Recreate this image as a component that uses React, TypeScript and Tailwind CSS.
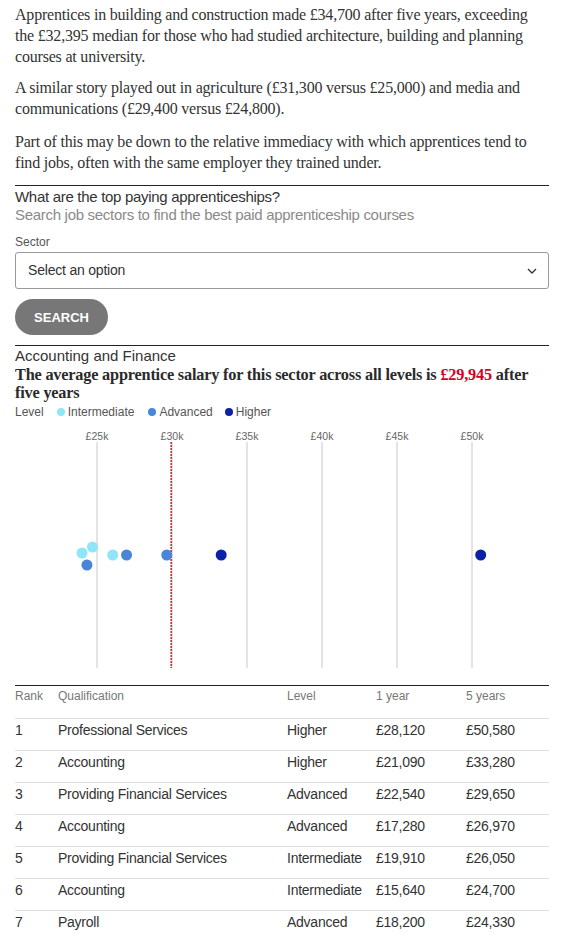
import React from "react";

const INT = "#8ee6f8";
const ADV = "#4a86d8";
const HI = "#0b22a6";

const ticks = [25, 30, 35, 40, 45, 50];
const xOf = (v: number) => 82 + (v - 25000) * 0.015;

const dots = [
  { v: 24000, cy: 133, c: INT },
  { v: 24700, cy: 127, c: INT },
  { v: 26050, cy: 135, c: INT },
  { v: 24330, cy: 145, c: ADV },
  { v: 26970, cy: 135, c: ADV },
  { v: 29650, cy: 135, c: ADV },
  { v: 33280, cy: 135, c: HI },
  { v: 50580, cy: 135, c: HI },
];

const rows = [
  ["1", "Professional Services", "Higher", "£28,120", "£50,580"],
  ["2", "Accounting", "Higher", "£21,090", "£33,280"],
  ["3", "Providing Financial Services", "Advanced", "£22,540", "£29,650"],
  ["4", "Accounting", "Advanced", "£17,280", "£26,970"],
  ["5", "Providing Financial Services", "Intermediate", "£19,910", "£26,050"],
  ["6", "Accounting", "Intermediate", "£15,640", "£24,700"],
  ["7", "Payroll", "Advanced", "£18,200", "£24,330"],
];

export default function App() {
  return (
    <div className="w-[585px] bg-white px-[15px] pt-[4px]">
      <div className="w-[534px]">
        <div className="font-['Liberation_Serif',serif] text-[16px] leading-[21px] tracking-[-0.2px] text-[#333]">
          <p>
            Apprentices in building and construction made £34,700 after five years, exceeding the £32,395 median for those who had studied architecture, building and planning courses at university.
          </p>
          <p className="mt-[10px]">
            A similar story played out in agriculture (£31,300 versus £25,000) and media and communications (£29,400 versus £24,800).
          </p>
          <p className="mt-[12px]">
            Part of this may be down to the relative immediacy with which apprentices tend to find jobs, often with the same employer they trained under.
          </p>
        </div>

        <section className="mt-[12px] border-t border-[#222] pt-[2px] font-['Liberation_Sans',Arial,sans-serif]">
          <h2 className="text-[15px] leading-[18px] tracking-[-0.3px] text-[#333]">What are the top paying apprenticeships?</h2>
          <p className="text-[15px] leading-[18px] tracking-[-0.3px] text-[#8a8a8a]">Search job sectors to find the best paid apprenticeship courses</p>
          <label className="mt-[10px] block text-[12px] leading-[16px] text-[#555]">Sector</label>
          <div className="mt-[2px] flex h-[37px] items-center justify-between rounded-[3px] border border-[#999] pl-[12px] pr-[11px]">
            <span className="text-[14px] tracking-[-0.2px] text-[#333]">Select an option</span>
            <svg width="10" height="6" viewBox="0 0 10 6">
              <polyline points="1,1 5,5 9,1" fill="none" stroke="#333" strokeWidth="1.3" />
            </svg>
          </div>
          <button className="mt-[10px] flex h-[36px] w-[93px] items-center justify-center rounded-full bg-[#777] pt-[1px] text-[13px] font-bold text-white">
            SEARCH
          </button>
        </section>

        <section className="mt-[10px] border-t border-[#222] pt-[1px] font-['Liberation_Sans',Arial,sans-serif]">
          <h3 className="text-[15px] leading-[18px] text-[#333]">Accounting and Finance</h3>
          <p className="mt-[1px] font-['Liberation_Serif',serif] text-[16.3px] font-bold leading-[18px] tracking-[-0.2px] text-[#2a2a2a]">
            The average apprentice salary for this sector across all levels is <span className="text-[#d4001e]">£29,945</span> after
            <br />
            five years
          </p>
          <div className="mt-[2px] flex h-[16px] items-center text-[12px] text-[#555]">
            <span className="mr-[13px]">Level</span>
            <span className="mr-[14px] flex items-center gap-[3px]">
              <span className="h-[8px] w-[8px] rounded-full bg-[#8ee6f8]" />
              Intermediate
            </span>
            <span className="mr-[12px] flex items-center gap-[3px]">
              <span className="h-[8px] w-[8px] rounded-full bg-[#4a86d8]" />
              Advanced
            </span>
            <span className="flex items-center gap-[3px]">
              <span className="h-[8px] w-[8px] rounded-full bg-[#0b22a6]" />
              Higher
            </span>
          </div>

          <svg width="534" height="260" className="block">
            {ticks.map((t) => {
              const x = xOf(t * 1000);
              return (
                <g key={t}>
                  <text x={x} y={20} textAnchor="middle" fontSize="10.5" fill="#666" fontFamily="Liberation Sans, Arial, sans-serif">
                    £{t}k
                  </text>
                  <line x1={x} x2={x} y1={22} y2={248} stroke="#c8c8c8" strokeWidth="1" />
                </g>
              );
            })}
            <line x1={xOf(29945)} x2={xOf(29945)} y1={22} y2={248} stroke="#b23a3a" strokeWidth="1.6" strokeDasharray="2 1" />
            {dots.map((d, i) => (
              <circle key={i} cx={xOf(d.v)} cy={d.cy} r={5.5} fill={d.c} />
            ))}
          </svg>

          <div className="mt-[5px] border-t border-[#222]">
            <div className="grid h-[32px] grid-cols-[43px_229px_89px_90px_1fr] pt-[2px] text-[12px] leading-[16px] text-[#777]">
              <span>Rank</span>
              <span>Qualification</span>
              <span>Level</span>
              <span>1 year</span>
              <span>5 years</span>
            </div>
            {rows.map((r) => (
              <div key={r[0]} className="grid h-[32px] grid-cols-[43px_229px_89px_90px_1fr] border-t border-[#ddd] pt-[3px] text-[14px] leading-[16px] tracking-[-0.25px] text-[#333]">
                {r.map((c, i) => (
                  <span key={i} className="whitespace-nowrap">{c}</span>
                ))}
              </div>
            ))}
          </div>
        </section>
      </div>
    </div>
  );
}
